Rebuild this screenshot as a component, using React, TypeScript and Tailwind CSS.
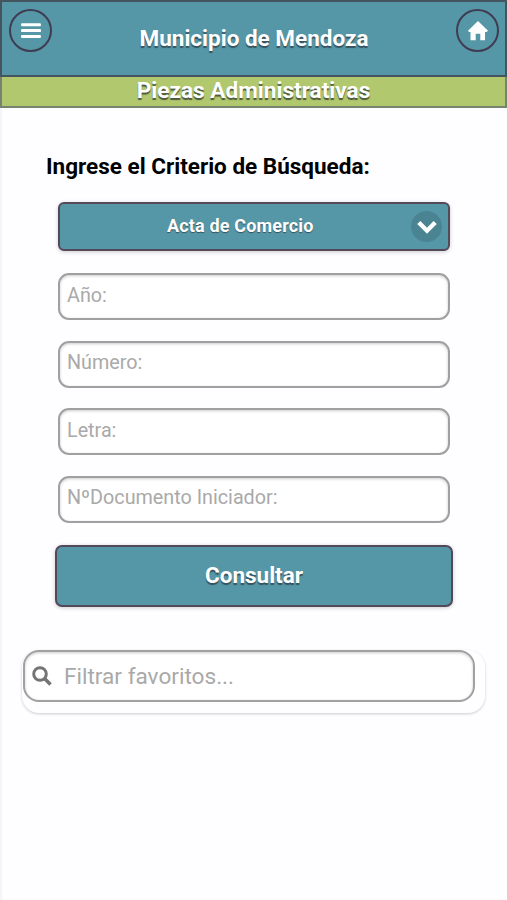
import React from 'react';

const fields = ["Año:", "Número:", "Letra:", "NºDocumento Iniciador:"];

const App: React.FC = () => {
  return (
    <div className="h-[900px] w-full overflow-hidden bg-[#fefdff] font-['Roboto',sans-serif] shadow-[inset_2px_0_2px_#f5f4f7]">
      {/* Header */}
      <header className="flex h-[77px] items-start justify-between border-2 border-[#44555f] bg-[#5597a7] pt-[7px] pr-[6px] pl-[7px]">
        <button aria-label="Menú" className="flex size-[43px] items-center justify-center rounded-full border-2 border-[#403c52]">
          <svg width="20" height="16" viewBox="0 0 20 16" fill="#fff">
            <rect y="0.2" width="20" height="3" rx="1.2" />
            <rect y="6.1" width="20" height="3" rx="1.2" />
            <rect y="12" width="20" height="3" rx="1.2" />
          </svg>
        </button>
        <h1 className="mt-[14px] text-[22.5px] leading-[30px] font-bold whitespace-nowrap text-white [text-shadow:0_2px_1px_#35515c]">
          Municipio de Mendoza
        </h1>
        <button aria-label="Inicio" className="flex size-[43px] items-center justify-center rounded-full border-2 border-[#403c52]">
          <svg width="20" height="20" viewBox="0 0 20 20" fill="#fff">
            <path d="M10 0 L20 9.8 L18.5 11 H17 V19.3 H12.3 V12.7 H7.7 V19.3 H2.5 V11 H1 L0 9.8 Z" />
          </svg>
        </button>
      </header>

      <div className="flex h-[31px] items-start justify-center border-2 border-t-0 border-[#77826f] bg-[#b1c86e]">
        <h2 className="text-[22.6px] leading-[28px] font-bold text-white [text-shadow:0_2px_1px_#4b5739]">
          Piezas Administrativas
        </h2>
      </div>

      {/* Search form */}
      <main>
        <h3 className="mt-[43px] ml-[46px] text-[22.5px] leading-[30px] font-bold text-black">
          Ingrese el Criterio de Búsqueda:
        </h3>

        <div className="mx-[58px] mt-[21px] flex h-[49px] w-[392px] items-center justify-between rounded-[6px] border-2 border-[#54495a] bg-[#5597a7] pr-[6px] pl-[107px] shadow-[0_1px_4px_rgba(0,0,0,0.2)]">
          <span className="mb-[2px] text-[18px] leading-6 font-bold tracking-[0.16px] text-white [text-shadow:0_1px_1px_#35515c]">
            Acta de Comercio
          </span>
          <span className="flex size-[31px] items-center justify-center rounded-full bg-[#4a8492]">
            <svg width="20" height="14" viewBox="0 0 20 14" fill="none" stroke="#fff" strokeWidth="4.4">
              <path d="M1.8 2.5 L10 10.7 L18.2 2.5" />
            </svg>
          </span>
        </div>

        <div className="mx-[58px] mt-[22px] flex w-[392px] flex-col gap-[20.5px]">
          {fields.map((field) => (
            <input
              key={field}
              placeholder={field}
              className="h-[47px] rounded-[11px] border-2 border-[#a0a0a0] bg-white px-[7px] pb-[3px] text-[19.75px] text-black shadow-[inset_0_1px_3px_rgba(0,0,0,0.2)] placeholder:text-[#a9a9a9]"
            />
          ))}
        </div>

        <button className="mt-[22.5px] ml-[55px] flex h-[62px] w-[398px] items-center justify-center rounded-[7px] border-2 border-[#54495a] bg-[#5597a7] text-[22.5px] font-bold text-white shadow-[0_1px_4px_rgba(0,0,0,0.2)] [text-shadow:0_2px_1px_#35515c]">
          Consultar
        </button>

        {/* Favourites filter */}
        <div className="mt-[43px] ml-[22px] h-[63px] w-[463px] rounded-[17px] pl-px shadow-[0_1px_3px_rgba(0,0,0,0.2)]">
          <div className="flex h-[52px] w-[452px] items-center rounded-[16px] border-2 border-[#a0a29f] bg-white pl-[7px] shadow-[inset_0_1px_3px_rgba(0,0,0,0.2)]">
            <svg width="20" height="20" viewBox="0 0 20 20" fill="none" stroke="#747474" strokeWidth="3">
              <circle cx="8" cy="8" r="6.3" />
              <path d="M12.5 12.5 L18.5 18.5" strokeWidth="3.6" />
            </svg>
            <input
              placeholder="Filtrar favoritos..."
              className="mt-[2px] ml-[12px] w-[380px] text-[22.6px] text-black outline-none placeholder:text-[#a9a9a9]"
            />
          </div>
        </div>
      </main>
    </div>
  );
};

export default App;
